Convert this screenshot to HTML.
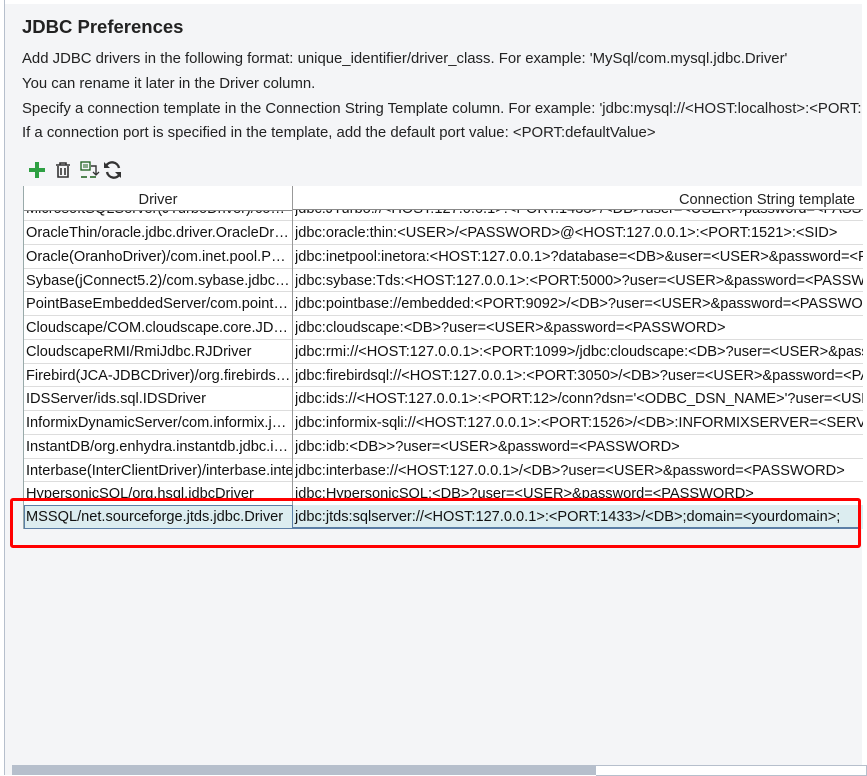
<!DOCTYPE html>
<html><head><style>
body{margin:0;width:867px;height:775px;overflow:hidden;background:#fff;font-family:"Liberation Sans",sans-serif;position:relative}
#bg{position:absolute;left:5px;top:4px;width:857px;height:771px;background:#f4f5f7}
#lstrip{position:absolute;left:0;top:0;width:4px;height:775px;background:#fff;border-right:1px solid #b6bfcc}
.t{position:absolute;left:22px;font-size:14.9px;color:#222;white-space:nowrap}
h1{position:absolute;left:22px;top:16px;margin:0;font-size:18.5px;font-weight:bold;color:#222}
#tbl{position:absolute;left:23px;top:186px;width:839px;height:343px;background:#fff;overflow:hidden;border-left:1px solid #9aa;}
.hdr{position:absolute;top:0;height:24px;line-height:28px;font-size:14.6px;color:#222;border-bottom:1px solid #888;background:#fff;z-index:2}
.row{position:absolute;left:0;width:839px;height:23.75px;border-bottom:1px solid #ddd;font-size:14.6px;color:#111;line-height:27px;white-space:nowrap}
.c1{position:absolute;left:2px;width:266px;overflow:hidden;text-overflow:ellipsis}
.c2{position:absolute;left:271px;width:600px;overflow:hidden}
.vline{position:absolute;left:268px;top:0;width:1px;height:343px;background:#999;z-index:3}
#sel{position:absolute;top:319px;left:0;width:839px;height:24px;background:#dcedf0;font-size:14.6px;line-height:25px;color:#111;white-space:nowrap;z-index:4}
#red{position:absolute;left:10px;top:498px;width:845px;height:44px;border:3px solid #f00;border-radius:3px;z-index:5}
#sb{position:absolute;left:12px;top:765px;width:584px;height:10px;background:#b6bfcc}
#sbw{position:absolute;left:596px;top:765px;width:270px;height:9px;background:#fff;border:1px solid #b6bfcc;border-left:none}
</style></head><body>
<div id="bg"></div><div id="lstrip"></div>
<h1>JDBC Preferences</h1>
<div class="t" style="top:51px">Add JDBC drivers in the following format: unique_identifier/driver_class. For example: 'MySql/com.mysql.jdbc.Driver'</div>
<div class="t" style="top:76px">You can rename it later in the Driver column.</div>
<div class="t" style="top:101px">Specify a connection template in the Connection String Template column. For example: 'jdbc:mysql://&lt;HOST:localhost&gt;:&lt;PORT:</div>
<div class="t" style="top:125px">If a connection port is specified in the template, add the default port value: &lt;PORT:defaultValue&gt;</div>
<svg style="position:absolute;left:28px;top:160px" width="96" height="20" viewBox="0 0 96 20">
<path d="M9 2v16M1 10h16" stroke="#2ea043" stroke-width="4"/>
<g fill="none" stroke="#333" stroke-width="1.6"><path d="M28 5h14M32 5V3h6v2M30 6v11h10V6M33 8v7M37 8v7"/></g>
<rect x="53" y="2" width="9" height="8" fill="none" stroke="#1a5e1a" stroke-width="1.3"/><path d="M55 5h5M55 7h5" stroke="#1a5e1a"/>
<path d="M63 6h5v8" fill="none" stroke="#333" stroke-width="1.4"/><path d="M65 12l3 3 3-3" fill="none" stroke="#333" stroke-width="1.3"/>
<path d="M53 17h6M62 17h6" stroke="#1a5e1a" stroke-width="1.5"/>
<path d="M91 8a7 7 0 0 0-13-2M79 12a7 7 0 0 0 13 2" fill="none" stroke="#333" stroke-width="2.4"/><path d="M76 2v6h6z M93 18v-6h-6z" fill="#333"/>
</svg>
<div id="tbl">
<div class="hdr" style="left:0;width:268px;text-align:center">Driver</div>
<div class="hdr" style="left:269px;width:570px;text-align:right;padding-right:8px;box-sizing:border-box">Connection String template</div>
<div class="vline"></div>
<div class="row" style="top:10.25px"><span class="c1">MicrosoftSQLServer(JTurboDriver)/com.ashna.jturbo</span><span class="c2">jdbc:JTurbo://&lt;HOST:127.0.0.1&gt;:&lt;PORT:1433&gt;/&lt;DB&gt;/user=&lt;USER&gt;/password=&lt;PASSWORD&gt;</span></div>
<div class="row" style="top:34px"><span class="c1">OracleThin/oracle.jdbc.driver.OracleDriver</span><span class="c2">jdbc:oracle:thin:&lt;USER&gt;/&lt;PASSWORD&gt;@&lt;HOST:127.0.0.1&gt;:&lt;PORT:1521&gt;:&lt;SID&gt;</span></div>
<div class="row" style="top:57.75px"><span class="c1">Oracle(OranhoDriver)/com.inet.pool.PoolDriver</span><span class="c2">jdbc:inetpool:inetora:&lt;HOST:127.0.0.1&gt;?database=&lt;DB&gt;&amp;user=&lt;USER&gt;&amp;password=&lt;PASSWORD&gt;</span></div>
<div class="row" style="top:81.5px"><span class="c1">Sybase(jConnect5.2)/com.sybase.jdbc2.jdbc.SybDriver</span><span class="c2">jdbc:sybase:Tds:&lt;HOST:127.0.0.1&gt;:&lt;PORT:5000&gt;?user=&lt;USER&gt;&amp;password=&lt;PASSWORD&gt;</span></div>
<div class="row" style="top:105.25px"><span class="c1">PointBaseEmbeddedServer/com.pointbase.jdbc</span><span class="c2">jdbc:pointbase://embedded:&lt;PORT:9092&gt;/&lt;DB&gt;?user=&lt;USER&gt;&amp;password=&lt;PASSWORD&gt;</span></div>
<div class="row" style="top:129px"><span class="c1">Cloudscape/COM.cloudscape.core.JDBCDriver</span><span class="c2">jdbc:cloudscape:&lt;DB&gt;?user=&lt;USER&gt;&amp;password=&lt;PASSWORD&gt;</span></div>
<div class="row" style="top:152.75px"><span class="c1">CloudscapeRMI/RmiJdbc.RJDriver</span><span class="c2">jdbc:rmi://&lt;HOST:127.0.0.1&gt;:&lt;PORT:1099&gt;/jdbc:cloudscape:&lt;DB&gt;?user=&lt;USER&gt;&amp;password=&lt;PASSWORD&gt;</span></div>
<div class="row" style="top:176.5px"><span class="c1">Firebird(JCA-JDBCDriver)/org.firebirdsql.jdbc</span><span class="c2">jdbc:firebirdsql://&lt;HOST:127.0.0.1&gt;:&lt;PORT:3050&gt;/&lt;DB&gt;?user=&lt;USER&gt;&amp;password=&lt;PASSWORD&gt;</span></div>
<div class="row" style="top:200.25px"><span class="c1">IDSServer/ids.sql.IDSDriver</span><span class="c2">jdbc:ids://&lt;HOST:127.0.0.1&gt;:&lt;PORT:12&gt;/conn?dsn='&lt;ODBC_DSN_NAME&gt;'?user=&lt;USER&gt;</span></div>
<div class="row" style="top:224px"><span class="c1">InformixDynamicServer/com.informix.jdbc.IfxDriver</span><span class="c2">jdbc:informix-sqli://&lt;HOST:127.0.0.1&gt;:&lt;PORT:1526&gt;/&lt;DB&gt;:INFORMIXSERVER=&lt;SERVER&gt;</span></div>
<div class="row" style="top:247.75px"><span class="c1">InstantDB/org.enhydra.instantdb.jdbc.idbDriver</span><span class="c2">jdbc:idb:&lt;DB&gt;&gt;?user=&lt;USER&gt;&amp;password=&lt;PASSWORD&gt;</span></div>
<div class="row" style="top:271.5px"><span class="c1" style="text-overflow:clip">Interbase(InterClientDriver)/interbase.interclient</span><span class="c2">jdbc:interbase://&lt;HOST:127.0.0.1&gt;/&lt;DB&gt;?user=&lt;USER&gt;&amp;password=&lt;PASSWORD&gt;</span></div>
<div class="row" style="top:295.25px"><span class="c1">HypersonicSQL/org.hsql.jdbcDriver</span><span class="c2">jdbc:HypersonicSQL:&lt;DB&gt;?user=&lt;USER&gt;&amp;password=&lt;PASSWORD&gt;</span></div>
<div id="sel"><span style="position:absolute;left:0;top:0;width:266px;height:22px;border:1px solid #5b7fa6;line-height:23px;padding-left:1px">MSSQL/net.sourceforge.jtds.jdbc.Driver</span><span style="position:absolute;left:271px">jdbc:jtds:sqlserver://&lt;HOST:127.0.0.1&gt;:&lt;PORT:1433&gt;/&lt;DB&gt;;domain=&lt;yourdomain&gt;;</span><span style="position:absolute;left:269px;top:22px;width:565px;height:2px;background:#5b7fa6"></span></div>
</div>
<div id="red"></div>
<div id="sb"></div><div id="sbw"></div>
</body></html>
